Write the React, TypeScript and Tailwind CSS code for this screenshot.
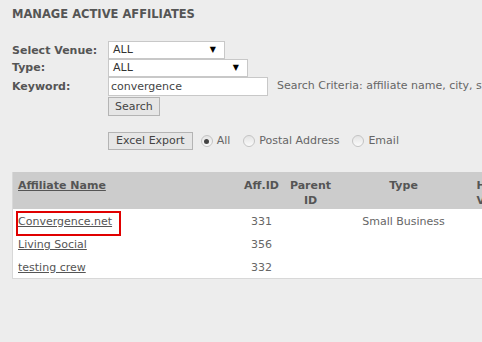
import React from "react";

const rows = [
  { name: "Convergence.net", id: "331", parent: "", type: "Small Business", marked: true },
  { name: "Living Social", id: "356", parent: "", type: "", marked: false },
  { name: "testing crew", id: "332", parent: "", type: "", marked: false },
];

function FakeSelect({ value, width }: { value: string; width: string }) {
  return (
    <div className={`${width} h-[18px] bg-white border border-[#c8c8c8] flex items-center justify-between pl-[4px] pr-[8px] text-[#333]`}>
      <span>{value}</span>
      <span className="text-[8px] text-black">▼</span>
    </div>
  );
}

function Radio({ checked, label }: { checked?: boolean; label: string }) {
  return (
    <label className="flex items-center gap-[4px] text-[#666]">
      <span className="w-[12px] h-[12px] rounded-full border border-[#c4c4c4] bg-gradient-to-b from-[#e4e4e4] to-[#fafafa] flex items-center justify-center">
        {checked && <span className="w-[5px] h-[5px] rounded-full bg-[#444]" />}
      </span>
      {label}
    </label>
  );
}

export default function App() {
  return (
    <div className="w-[482px] h-[342px] overflow-hidden bg-[#ededed] font-['DejaVu_Sans',sans-serif] text-[11px] text-[#555]">
      <div className="pl-[12px] pt-[7px]">
        <h1 className="font-bold text-[11.5px] text-[#555] leading-[14px]">MANAGE ACTIVE AFFILIATES</h1>

        <div className="mt-[20px] grid grid-cols-[96px_auto] items-center">
          <div className="font-bold h-[17px] leading-[17px]">Select Venue:</div>
          <FakeSelect value="ALL" width="w-[117px]" />
          <div className="font-bold h-[18px] leading-[18px]">Type:</div>
          <FakeSelect value="ALL" width="w-[140px]" />
          <div className="font-bold h-[19px] leading-[19px]">Keyword:</div>
          <div className="flex items-center gap-[9px]">
            <div className="w-[160px] h-[19px] bg-white border border-[#c8c8c8] pl-[2px] leading-[17px] text-[#444]">convergence</div>
            <span className="whitespace-nowrap text-[#666]">Search Criteria: affiliate name, city, state</span>
          </div>
          <div />
          <div className="pt-[1px]">
            <button className="h-[19px] px-[6px] border border-[#b4b4b4] bg-[#e6e6e6] text-[#444] leading-[17px]">Search</button>
          </div>
        </div>

        <div className="mt-[16px] ml-[96px] flex items-center gap-[8px]">
          <button className="h-[18px] px-[7px] border border-[#b4b4b4] bg-[#e6e6e6] text-[#444] leading-[16px]">Excel Export</button>
          <div className="flex items-center gap-[13px]">
            <Radio checked label="All" />
            <Radio label="Postal Address" />
            <Radio label="Email" />
          </div>
        </div>

        <table className="mt-[22px] border-collapse table-fixed w-[560px] border-l border-b border-[#d8d8d8]">
          <thead>
            <tr className="bg-[#cccccc] h-[37px] align-top">
              <th className="w-[225px] text-left font-bold pl-[5px] pt-[6px] leading-[15px]">
                <a className="underline text-[#555]">Affiliate Name</a>
              </th>
              <th className="w-[48px] font-bold pt-[6px] leading-[15px]">Aff.ID</th>
              <th className="w-[50px] font-bold pt-[6px] leading-[15px]">Parent<br />ID</th>
              <th className="w-[136px] font-bold pt-[6px] leading-[15px]">Type</th>
              <th className="w-[101px] font-bold pt-[6px] leading-[15px] text-left pl-[5px]">Home<br />Venue</th>
            </tr>
          </thead>
          <tbody className="bg-white text-[#666]">
            {rows.map((r) => (
              <tr key={r.id} className="h-[23px]">
                <td className="pl-[5px] pt-[3px]">
                  <span className="relative inline-block">
                    <a className="underline text-[#555]">{r.name}</a>
                    {r.marked && (
                      <span className="absolute left-[-2px] right-[-9px] top-[-3px] bottom-[-6px] border-2 border-[#e00000]" />
                    )}
                  </span>
                </td>
                <td className="text-center pt-[3px]">{r.id}</td>
                <td className="text-center pt-[3px]">{r.parent}</td>
                <td className="text-center pt-[3px]">{r.type}</td>
                <td />
              </tr>
            ))}
          </tbody>
        </table>
      </div>
    </div>
  );
}
